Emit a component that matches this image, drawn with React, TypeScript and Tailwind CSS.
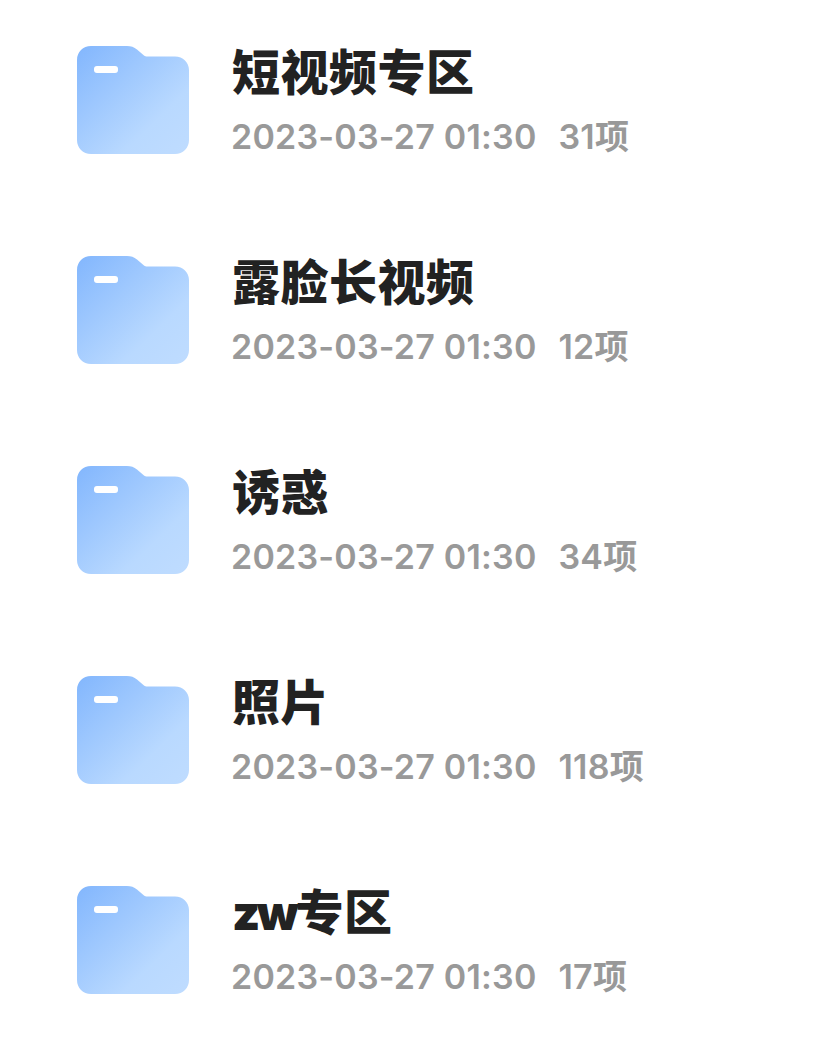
const folders = [
  { name: "短视频专区", count: 31 },
  { name: "露脸长视频", count: 12 },
  { name: "诱惑", count: 34 },
  { name: "照片", count: 118 },
  { name: "zw专区", count: 17 },
];

function FolderIcon({ id }: { id: string }) {
  return (
    <svg width="112" height="110" viewBox="0 0 112 110" className="shrink-0">
      <defs>
        <linearGradient id={id} x1="0" y1="0" x2="1" y2="1">
          <stop offset="0%" stopColor="#82b6fd" />
          <stop offset="70%" stopColor="#b9d9ff" />
          <stop offset="100%" stopColor="#bfdcff" />
        </linearGradient>
      </defs>
      <path
        d="M14 1H50C54 1 57 2 60 4.5L67 10.5C68 11.3 69 11.5 70 11.5H98C106 11.5 112 17.5 112 25V95C112 103 106 109 98 109H14C6 109 0 103 0 95V15C0 7 6 1 14 1Z"
        fill={`url(#${id})`}
      />
      <rect x="17" y="21" width="24" height="7" rx="3" fill="#ffffff" />
    </svg>
  );
}

export default function App() {
  return (
    <div
      className="w-[836px] h-[1042px] bg-white overflow-hidden pt-[45px] pl-[77px] flex flex-col gap-[100px]"
      style={{ fontFamily: '"Inter", "Noto Sans CJK SC", sans-serif' }}
    >
      {folders.map((f, i) => (
        <div key={i} className="flex items-start gap-[43px] h-[110px]">
          <FolderIcon id={`folder-${i}`} />
          <div className="flex flex-col">
            <div className="text-[48px] leading-[56px] font-black text-[#222222] tracking-[0.5px]">
              {f.name.startsWith("zw") ? (
                <>
                  <span className="tracking-[-3.5px]">zw</span>
                  {f.name.slice(2)}
                </>
              ) : (
                f.name
              )}
            </div>
            <div className="mt-[16px] ml-[-1px] text-[34px] leading-[40px] font-semibold text-[#999999] whitespace-pre tracking-[0.2px]">
              2023-03-27 01:30
              <span className="ml-[22px]">{f.count}项</span>
            </div>
          </div>
        </div>
      ))}
    </div>
  );
}
